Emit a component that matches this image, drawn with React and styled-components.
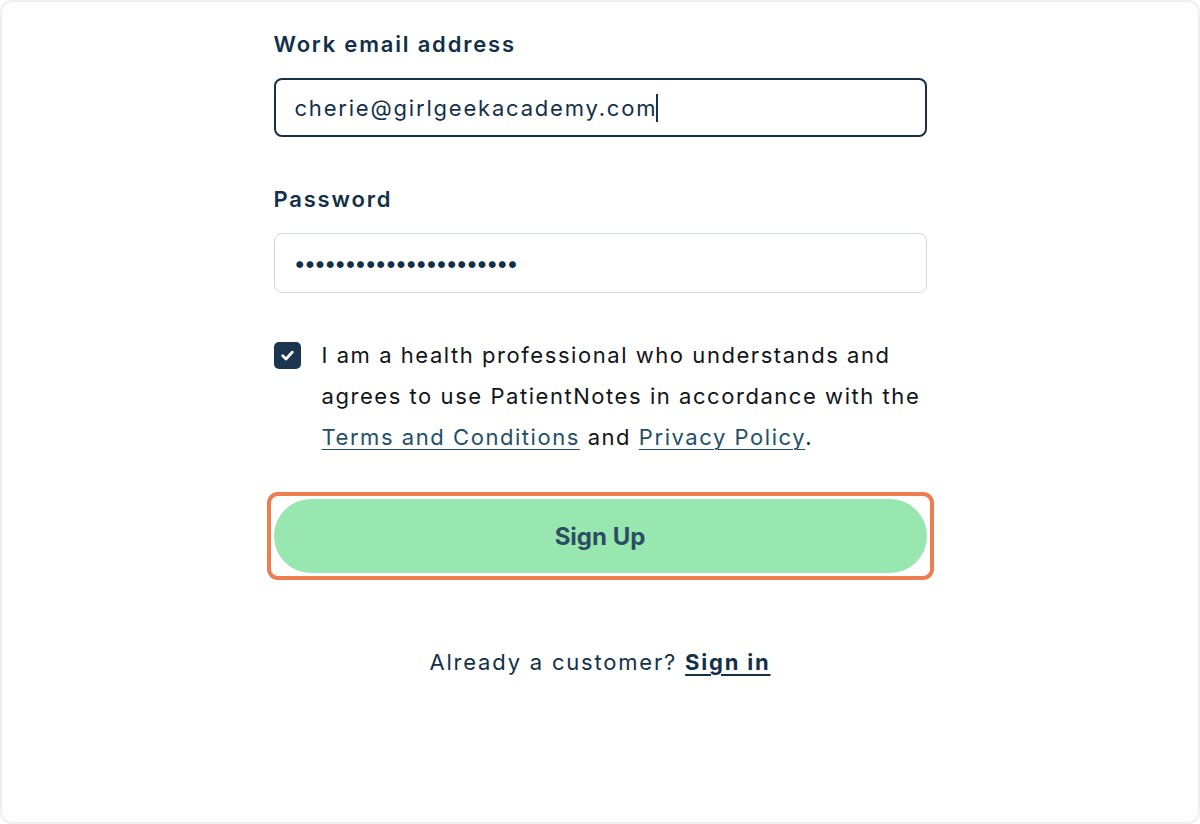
import React from "react";
import styled, { createGlobalStyle } from "styled-components";

const Global = createGlobalStyle`
  html, body { margin: 0; padding: 0; background: #ffffff; }
  body { font-family: "Inter", "Noto Sans", sans-serif; }
  * { box-sizing: border-box; }
`;

const Frame = styled.div`
  width: 1200px;
  height: 824px;
  border: 2px solid #eeeff2;
  border-radius: 12px;
  background: #ffffff;
  display: flex;
  justify-content: center;
  overflow: hidden;
`;

const Form = styled.form`
  width: 653px;
  padding-top: 28px;
  display: flex;
  flex-direction: column;
  letter-spacing: 1.8px;
`;

const Field = styled.div`
  display: flex;
  flex-direction: column;
  gap: 20px;
  margin-bottom: ${(p) => p.$mb || 0}px;
`;

const Label = styled.label`
  font-size: 22px;
  font-weight: 600;
  color: #13304a;
  line-height: 28px;
`;

const Input = styled.div`
  height: ${(p) => (p.$focused ? 59 : 60)}px;
  border: ${(p) => (p.$focused ? "2px solid #1a2f45" : "1.5px solid #d3d7de")};
  border-radius: 8px;
  display: flex;
  align-items: center;
  padding-left: ${(p) => (p.$focused ? 19 : 20)}px;
  font-size: 22px;
  color: #13304a;
`;

const Caret = styled.span`
  display: inline-block;
  width: 1.5px;
  height: 28px;
  background: #13304a;
  margin-left: -1px;
`;

const Dots = styled.span`
  font-size: 22px;
  letter-spacing: -0.3px;
  color: #13304a;
  font-weight: 700;
`;

const ConsentRow = styled.div`
  display: flex;
  gap: 21px;
  align-items: flex-start;
  margin-bottom: 34px;
`;

const Box = styled.span`
  flex: none;
  width: 27px;
  height: 27px;
  margin-top: 7px;
  border-radius: 5px;
  background: #1a3650;
  display: flex;
  align-items: center;
  justify-content: center;
`;

const ConsentText = styled.p`
  margin: 0;
  font-size: 22px;
  line-height: 41px;
  color: #111418;
  white-space: nowrap;
  letter-spacing: 1.55px;
`;

const Link = styled.a`
  color: #1f5068;
  text-decoration: underline;
  text-underline-offset: 4px;
  text-decoration-thickness: 1px;
`;

const Highlight = styled.div`
  border: 4px solid #ef7d50;
  border-radius: 11px;
  padding: 3px;
  margin: 0 -7px;
`;

const Button = styled.button`
  width: 100%;
  height: 74px;
  border: none;
  border-radius: 37px;
  background: #98e7b0;
  color: #2d4d63;
  font-family: inherit;
  font-size: 24px;
  font-weight: 700;
  letter-spacing: 0;
  display: block;
`;

const Footer = styled.p`
  margin: 69px 0 0;
  text-align: center;
  font-size: 22px;
  color: #13304a;
`;

const SignIn = styled.a`
  font-weight: 700;
  color: #13304a;
  text-decoration: underline;
  text-underline-offset: 4px;
  text-decoration-thickness: 2px;
`;

export default function App() {
  return (
    <>
      <Global />
      <Frame>
        <Form onSubmit={(e) => e.preventDefault()}>
          <Field $mb={48}>
            <Label>Work email address</Label>
            <Input $focused>
              cherie@girlgeekacademy.com
              <Caret />
            </Input>
          </Field>
          <Field $mb={42}>
            <Label>Password</Label>
            <Input>
              <Dots>{"•".repeat(22)}</Dots>
            </Input>
          </Field>
          <ConsentRow>
            <Box>
              <svg width="17" height="17" viewBox="0 0 16 16" fill="none">
                <path d="M3.5 8.3 L6.6 11.3 L12.5 4.8" stroke="#fff" strokeWidth="2.6" strokeLinecap="round" strokeLinejoin="round" />
              </svg>
            </Box>
            <ConsentText>
              I am a health professional who understands and
              <br />
              agrees to use PatientNotes in accordance with the
              <br />
              <Link href="#">Terms and Conditions</Link> and <Link href="#">Privacy Policy</Link>.
            </ConsentText>
          </ConsentRow>
          <Highlight>
            <Button type="submit">Sign Up</Button>
          </Highlight>
          <Footer>
            Already a customer? <SignIn href="#">Sign in</SignIn>
          </Footer>
        </Form>
      </Frame>
    </>
  );
}
